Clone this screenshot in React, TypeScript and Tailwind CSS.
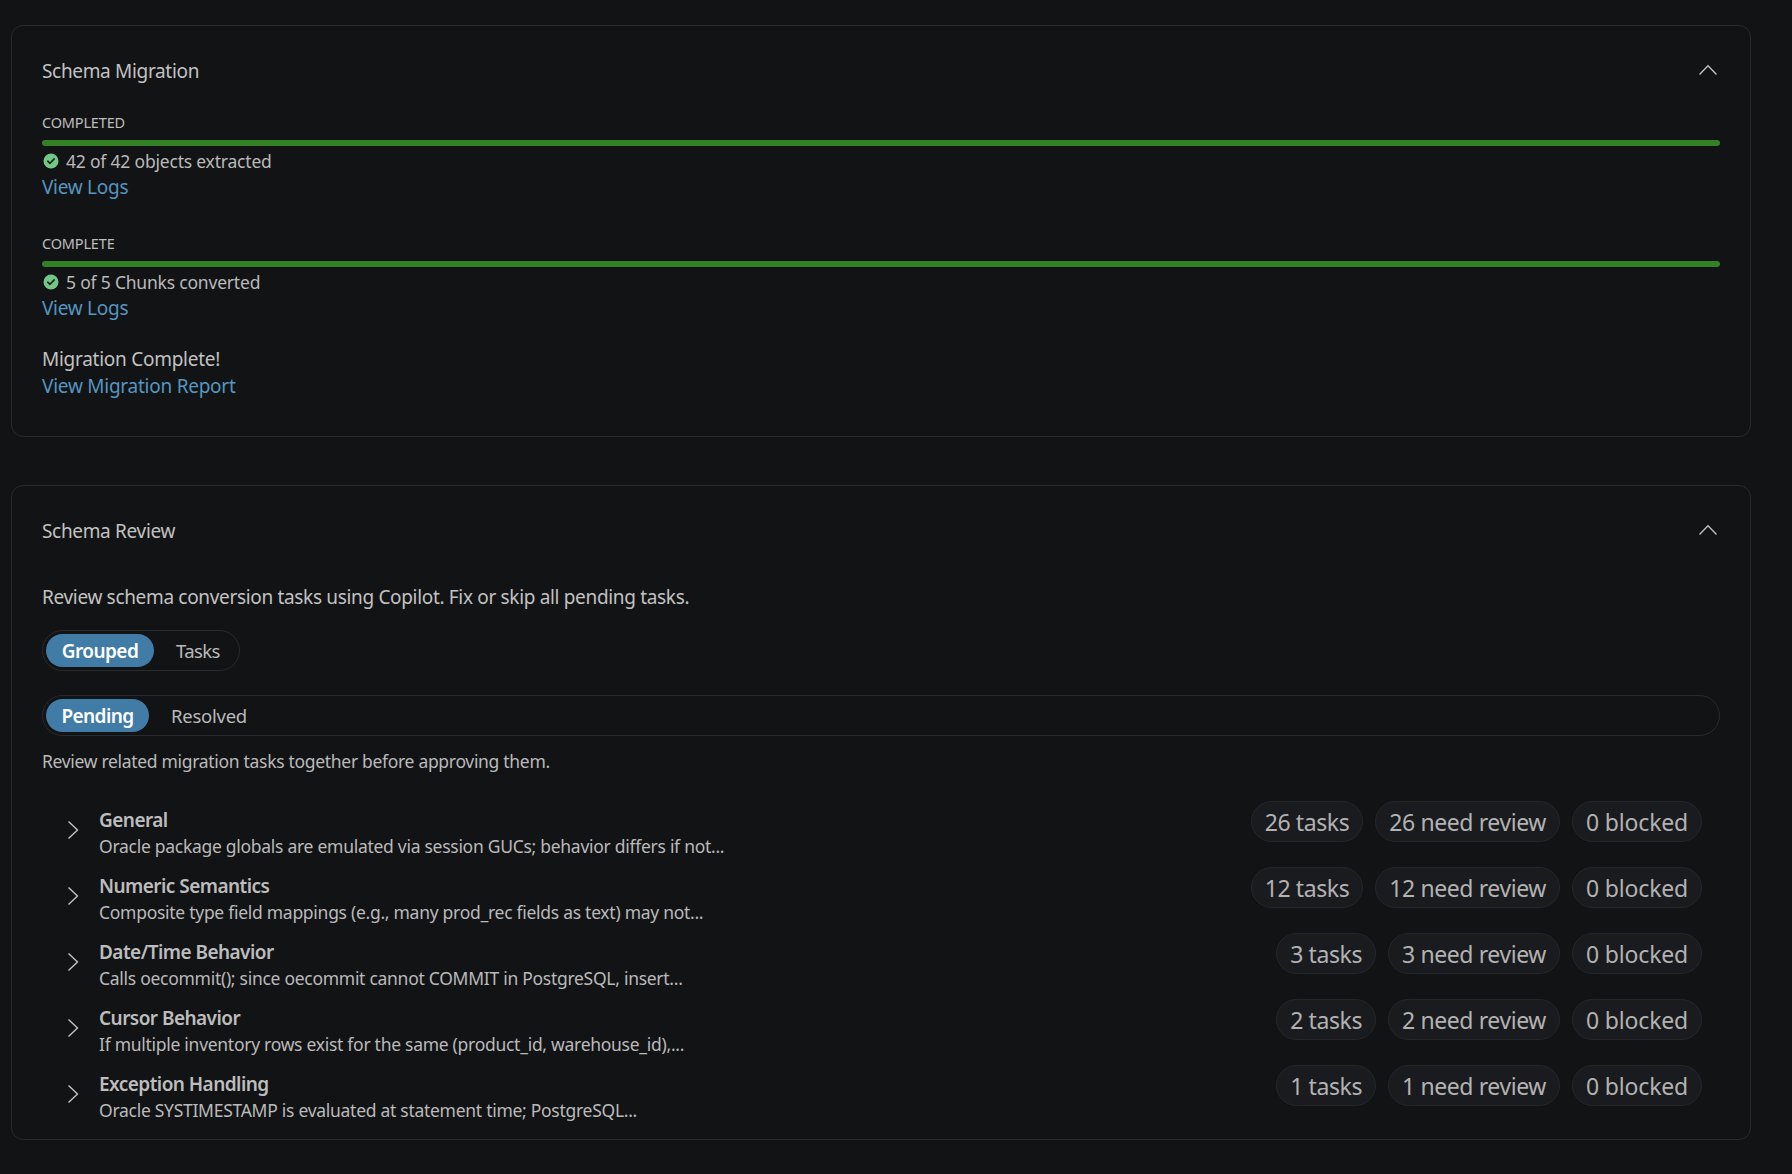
import { ReactNode } from "react";

const FONT = "font-['Noto_Sans','Open_Sans',sans-serif]";

const groups = [
  { name: "General", detail: "Oracle package globals are emulated via session GUCs; behavior differs if not...", tasks: 26 },
  { name: "Numeric Semantics", detail: "Composite type field mappings (e.g., many prod_rec fields as text) may not...", tasks: 12 },
  { name: "Date/Time Behavior", detail: "Calls oecommit(); since oecommit cannot COMMIT in PostgreSQL, insert...", tasks: 3 },
  { name: "Cursor Behavior", detail: "If multiple inventory rows exist for the same (product_id, warehouse_id),...", tasks: 2 },
  { name: "Exception Handling", detail: "Oracle SYSTIMESTAMP is evaluated at statement time; PostgreSQL...", tasks: 1 },
];

function CheckBadge() {
  return (
    <svg width="16" height="16" viewBox="0 0 16 16" className="ml-px shrink-0">
      <circle cx="8" cy="8" r="7.5" fill="#73c687" />
      <path d="M4.8 8.2 7 10.3 11.2 5.9" fill="none" stroke="#14201a" strokeWidth="1.6" strokeLinecap="round" strokeLinejoin="round" />
    </svg>
  );
}

function ChevronUp() {
  return (
    <svg width="20" height="12" viewBox="0 0 20 12" className="mb-0.5 mr-0.5 shrink-0">
      <path d="M1.5 10.5 10 1.8 18.5 10.5" fill="none" stroke="#c4c4c4" strokeWidth="1.3" />
    </svg>
  );
}

function ChevronRight() {
  return (
    <svg width="12" height="20" viewBox="0 0 12 20" className="-ml-px mr-px shrink-0">
      <path d="M1.5 1.5 10.5 10 1.5 18.5" fill="none" stroke="#c4c4c4" strokeWidth="1.4" />
    </svg>
  );
}

function Panel({ title, children, className }: { title: string; children: ReactNode; className: string }) {
  return (
    <section className={`rounded-xl border border-[#2a2b2e] px-[30px] pt-[31px] ${className}`}>
      <div className="flex h-7 items-center justify-between">
        <h2 className="text-[19px] leading-7 tracking-[-0.33px] text-[#c2c2c2]">{title}</h2>
        <ChevronUp />
      </div>
      {children}
    </section>
  );
}

function Step({ label, status, className }: { label: string; status: string; className: string }) {
  return (
    <div className={className}>
      <div className="h-[18px] text-[14.5px] leading-[18px] tracking-[-0.17px] text-[#bdbdbd]">{label}</div>
      <div className="mt-[9px] h-1.5 rounded-sm bg-[#338025]" />
      <div className="mt-0.5 flex h-[26px] items-center gap-[7px] text-[17.5px] leading-[26px] tracking-[-0.2px] text-[#bababa]">
        <CheckBadge />
        {status}
      </div>
      <a className="block h-[26px] text-[19px] leading-[26px] tracking-[-0.28px] text-[#5596c0]">View Logs</a>
    </div>
  );
}

function Segmented({ active, other, activeWidth, otherClass, className }: { active: string; other: string; activeWidth: string; otherClass: string; className: string }) {
  return (
    <div className={`flex h-[41px] items-center rounded-full border border-[#2a2b2e] pl-[3px] ${className}`}>
      <span className={`flex h-[33px] items-center justify-center rounded-full bg-[#417ca6] pt-px text-[19px] font-semibold tracking-[-0.57px] text-white ${activeWidth}`}>
        {active}
      </span>
      <span className={`ml-[22px] text-[18.5px] text-[#bababa] ${otherClass}`}>{other}</span>
    </div>
  );
}

function Pill({ children, className = "tracking-[-0.4px]" }: { children: ReactNode; className?: string }) {
  return (
    <span className={`flex h-[41px] items-center rounded-full border border-[#26272a] bg-[#1a1b1e] px-[13px] pt-px text-[23px] text-[#b2b2b2] ${className}`}>
      {children}
    </span>
  );
}

export default function App() {
  return (
    <div className={`h-[1174px] overflow-hidden bg-[#121315] pl-[11px] pt-[25px] ${FONT}`}>
      <div className="w-[1740px]">
        <Panel title="Schema Migration" className="h-[412px]">
          <Step label="COMPLETED" status="42 of 42 objects extracted" className="mt-[28px]" />
          <Step label="COMPLETE" status="5 of 5 Chunks converted" className="mt-[34px]" />
          <div className="mt-[25px] h-[26px] text-[19px] leading-[26px] tracking-[-0.27px] text-[#c2c2c2]">Migration Complete!</div>
          <a className="mt-px block h-[26px] text-[19px] leading-[26px] tracking-[-0.25px] text-[#5596c0]">View Migration Report</a>
        </Panel>

        <Panel title="Schema Review" className="mt-[48px] h-[655px]">
          <p className="mt-[39px] h-[26px] text-[19px] leading-[26px] tracking-[-0.33px] text-[#c2c2c2]">
            Review schema conversion tasks using Copilot. Fix or skip all pending tasks.
          </p>
          <Segmented active="Grouped" other="Tasks" activeWidth="w-[108px]" otherClass="tracking-[-0.6px]" className="mt-5 w-[198px]" />
          <Segmented active="Pending" other="Resolved" activeWidth="w-[103px]" otherClass="tracking-[-0.25px]" className="mt-6" />
          <p className="mt-[13px] h-6 text-[17.5px] leading-6 tracking-[-0.31px] text-[#bababa]">
            Review related migration tasks together before approving them.
          </p>
          <div className="mt-6">
            {groups.map((g) => (
              <div key={g.name} className="flex h-[66px] items-center pl-[26px] pr-[18px]">
                <ChevronRight />
                <div className="ml-[19px] min-w-0 flex-1 self-start pt-[10px]">
                  <div className="h-[26px] text-[19px] font-semibold leading-[26px] tracking-[-0.55px] text-[#bdbdbd]">{g.name}</div>
                  <div className="h-[26px] text-[17.5px] leading-[26px] tracking-[-0.28px] text-[#bababa]">{g.detail}</div>
                </div>
                <div className="flex gap-3 self-start pt-1">
                  <Pill>{g.tasks} tasks</Pill>
                  <Pill>{g.tasks} need review</Pill>
                  <Pill className="tracking-[-0.18px]">0 blocked</Pill>
                </div>
              </div>
            ))}
          </div>
        </Panel>
      </div>
    </div>
  );
}
